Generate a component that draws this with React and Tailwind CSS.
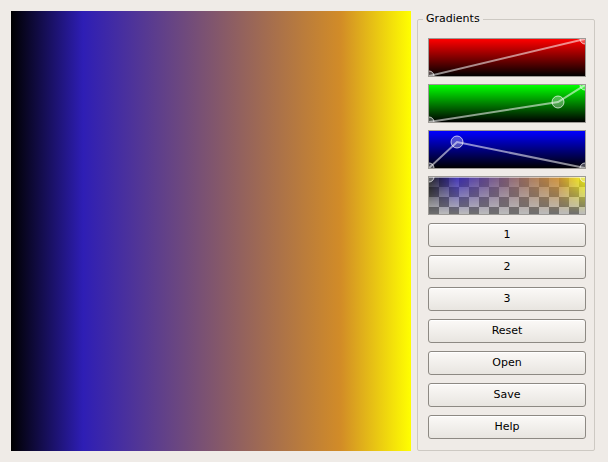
import React from 'react';

const W = 156;
const H = 37;

function Curve({ points, bg, alpha }) {
  const d = points.map((p, i) => `${i ? 'L' : 'M'}${p[0]},${p[1]}`).join(' ');
  return (
    <div className="relative w-[158px] h-[39px] border border-[#9d9a96] overflow-hidden">
      {alpha ? (
        <>
          <div className="absolute inset-0 bg-[repeating-conic-gradient(#6f6f6f_0_25%,#bcbcbc_0_50%)] bg-[length:20px_20px]" />
          <div className="absolute inset-0 bg-[linear-gradient(to_right,#000_0%,rgb(46,30,181)_18%,rgb(210,140,39)_82.5%,#ff0_100%)] [mask-image:linear-gradient(to_bottom,rgba(0,0,0,0.85),rgba(0,0,0,0))]" />
        </>
      ) : (
        <div className={`absolute inset-0 ${bg}`} />
      )}
      <svg className="absolute inset-0" width={W} height={H} viewBox={`0 0 ${W} ${H}`}>
        <path d={d} fill="none" stroke="rgba(255,255,255,0.55)" strokeWidth="2" />
        {points.map((p, i) => (
          <circle
            key={i}
            cx={p[0]}
            cy={p[1]}
            r={i === 0 || i === points.length - 1 ? 5 : 6}
            fill="rgba(255,255,255,0.3)"
            stroke="rgba(255,255,255,0.7)"
            strokeWidth="1"
          />
        ))}
      </svg>
    </div>
  );
}

function Btn({ children }) {
  return (
    <button className="w-[158px] h-[24px] rounded-[3px] border border-[#8d8983] bg-[linear-gradient(to_bottom,#fbf9f7,#e8e5e0)] text-[11px] text-black flex items-center justify-center shadow-[inset_0_1px_0_#fff]">
      {children}
    </button>
  );
}

export default function App() {
  return (
    <div className="w-[608px] h-[462px] bg-[#efebe7] flex gap-[6px] p-[11px] font-['DejaVu_Sans',sans-serif] overflow-hidden">
      <div className="w-[400px] h-[440px] shrink-0 bg-[linear-gradient(to_right,#000_0%,rgb(46,30,181)_18%,rgb(210,140,39)_82.5%,#ff0_100%)]" />

      <div className="mt-[8px] relative w-[178px] h-[432px] border border-[#cdc9c3] rounded-[2px] pt-[18px] pl-[10px] flex flex-col">
        <span className="absolute -top-[8px] left-[5px] px-[3px] bg-[#efebe7] text-[11px] leading-[14px] text-black">
          Gradients
        </span>
        <div className="flex flex-col gap-[7px]">
          <Curve bg="bg-[linear-gradient(to_bottom,#f00,#000)]" points={[[0, 37], [156, 0]]} />
          <Curve bg="bg-[linear-gradient(to_bottom,#0f0,#000)]" points={[[0, 37], [129, 17], [156, 0]]} />
          <Curve bg="bg-[linear-gradient(to_bottom,#00f,#000)]" points={[[0, 37], [28, 11], [156, 37]]} />
          <Curve alpha points={[[0, 0], [156, 0]]} />
        </div>
        <div className="mt-[8px] flex flex-col gap-[8px]">
          <Btn>1</Btn>
          <Btn>2</Btn>
          <Btn>3</Btn>
          <Btn>Reset</Btn>
          <Btn>Open</Btn>
          <Btn>Save</Btn>
          <Btn>Help</Btn>
        </div>
      </div>
    </div>
  );
}
